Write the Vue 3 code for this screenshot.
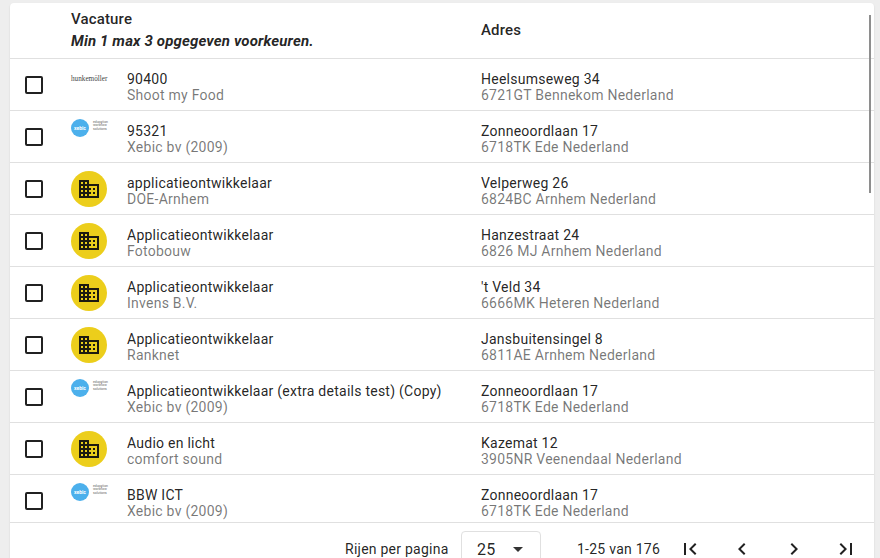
<template>
  <div class="page">
    <div class="card">
      <div class="table-wrap">
        <div class="row head">
          <div class="cell-check"></div>
          <div class="cell-title">
            <div class="head-title">Vacature</div>
            <div class="head-note">Min 1 max 3 opgegeven voorkeuren.</div>
          </div>
          <div class="cell-addr head-title">Adres</div>
        </div>

        <div v-for="row in rows" :key="row.id" class="row">
          <div class="cell-check"><span class="checkbox"></span></div>
          <div class="cell-logo">
            <div v-if="row.logo === 'hunkemoller'" class="logo-hunk">hunkemöller</div>
            <div v-else-if="row.logo === 'xebic'" class="logo-xebic">
              <span class="xebic-dot">xebic</span>
              <span class="xebic-tag">education<br />workflow<br />solutions</span>
            </div>
            <div v-else class="logo-default">
              <svg width="24" height="24" viewBox="0 0 24 24">
                <path fill="#1d1a10" d="M12 7V3H2v18h20V7H12zM6 19H4v-2h2v2zm0-4H4v-2h2v2zm0-4H4V9h2v2zm0-4H4V5h2v2zm4 12H8v-2h2v2zm0-4H8v-2h2v2zm0-4H8V9h2v2zm0-4H8V5h2v2zm10 12h-8v-2h2v-2h-2v-2h2v-2h-2V9h8v10zm-2-8h-2v2h2v-2zm0 4h-2v2h2v-2z" />
              </svg>
            </div>
          </div>
          <div class="cell-text">
            <div class="main">{{ row.title }}</div>
            <div class="sub">{{ row.company }}</div>
          </div>
          <div class="cell-addr cell-body">
            <div class="main">{{ row.street }}</div>
            <div class="sub">{{ row.city }}</div>
          </div>
        </div>
        <div class="scrollbar"></div>
      </div>

      <div class="footer">
        <span class="rows-label">Rijen per pagina</span>
        <div class="select">
          <span>25</span>
          <span class="caret"></span>
        </div>
        <span class="range">1-25 van 176</span>
        <div class="pager">
          <svg width="24" height="24" viewBox="0 0 24 24"><path d="M18.41 16.59 13.82 12l4.59-4.59L17 6l-6 6 6 6zM6 6h2v12H6z" /></svg>
          <svg width="24" height="24" viewBox="0 0 24 24"><path d="M15.41 7.41 14 6l-6 6 6 6 1.41-1.41L10.83 12z" /></svg>
          <svg width="24" height="24" viewBox="0 0 24 24"><path d="M10 6 8.59 7.41 13.17 12l-4.58 4.59L10 18l6-6z" /></svg>
          <svg width="24" height="24" viewBox="0 0 24 24"><path d="M5.59 7.41 10.18 12l-4.59 4.59L7 18l6-6-6-6zM16 6h2v12h-2z" /></svg>
        </div>
      </div>
    </div>
  </div>
</template>

<script setup>
const rows = [
  { id: 1, logo: 'hunkemoller', title: '90400', company: 'Shoot my Food', street: 'Heelsumseweg 34', city: '6721GT Bennekom Nederland' },
  { id: 2, logo: 'xebic', title: '95321', company: 'Xebic bv (2009)', street: 'Zonneoordlaan 17', city: '6718TK Ede Nederland' },
  { id: 3, logo: 'default', title: 'applicatieontwikkelaar', company: 'DOE-Arnhem', street: 'Velperweg 26', city: '6824BC Arnhem Nederland' },
  { id: 4, logo: 'default', title: 'Applicatieontwikkelaar', company: 'Fotobouw', street: 'Hanzestraat 24', city: '6826 MJ Arnhem Nederland' },
  { id: 5, logo: 'default', title: 'Applicatieontwikkelaar', company: 'Invens B.V.', street: "'t Veld 34", city: '6666MK Heteren Nederland' },
  { id: 6, logo: 'default', title: 'Applicatieontwikkelaar', company: 'Ranknet', street: 'Jansbuitensingel 8', city: '6811AE Arnhem Nederland' },
  { id: 7, logo: 'xebic', title: 'Applicatieontwikkelaar (extra details test) (Copy)', company: 'Xebic bv (2009)', street: 'Zonneoordlaan 17', city: '6718TK Ede Nederland' },
  { id: 8, logo: 'default', title: 'Audio en licht', company: 'comfort sound', street: 'Kazemat 12', city: '3905NR Veenendaal Nederland' },
  { id: 9, logo: 'xebic', title: 'BBW ICT', company: 'Xebic bv (2009)', street: 'Zonneoordlaan 17', city: '6718TK Ede Nederland' }
]
</script>

<style>
html, body {
  margin: 0;
  height: 100%;
  overflow: hidden;
  background: #eeeeee;
}
</style>

<style scoped>
.page {
  height: 558px;
  padding: 3px 6px 0 10px;
  box-sizing: border-box;
  background: #eeeeee;
  font-family: Roboto, sans-serif;
  font-size: 14px;
  letter-spacing: 0.25px;
  color: rgba(0, 0, 0, 0.87);
  overflow: hidden;
}

.card {
  background: #fff;
  height: 100%;
  border-radius: 4px 4px 0 0;
  box-shadow: 0 1px 2px rgba(0, 0, 0, 0.12);
  overflow: hidden;
}

/* scroll area: last row is cut off by the footer */
.table-wrap {
  position: relative;
  height: 519px;
  overflow: hidden;
}

.row {
  display: flex;
  align-items: center;
  height: 52px;
  box-sizing: border-box;
  border-bottom: 1px solid #e0e0e0;
}

.row.head {
  height: 56px;
  padding-bottom: 2px;
}

.cell-check {
  width: 61px;
  flex: none;
  padding-left: 15px;
  box-sizing: border-box;
  display: flex;
}

.checkbox {
  width: 18px;
  height: 18px;
  box-sizing: border-box;
  border: 2px solid #212121;
  border-radius: 2px;
  margin-top: 1px;
}

.cell-title {
  width: 410px;
  flex: none;
}

.head-title {
  font-size: 15px;
  font-weight: 500;
  letter-spacing: 0.15px;
  line-height: 20px;
}

.head-note {
  font-size: 15px;
  font-weight: 700;
  font-style: italic;
  letter-spacing: 0.15px;
  line-height: 20px;
  margin-top: 2px;
}

.cell-logo {
  width: 56px;
  height: 100%;
  flex: none;
  padding-top: 8px;
  box-sizing: border-box;
}

.cell-text {
  width: 354px;
  flex: none;
  padding-top: 5px;
}

.cell-body {
  padding-top: 5px;
}

.main {
  line-height: 16px;
}

.sub {
  line-height: 16px;
  color: rgba(0, 0, 0, 0.54);
}

.logo-hunk {
  font-family: "Liberation Serif", serif;
  font-size: 7.2px;
  letter-spacing: 0;
  line-height: 24px;
  height: 24px;
  color: #444;
}

.logo-xebic {
  display: flex;
  align-items: center;
  gap: 4px;
}

.xebic-dot {
  width: 18px;
  height: 18px;
  border-radius: 50%;
  background: #4cb0ec;
  color: #fff;
  font-size: 5px;
  font-weight: 700;
  letter-spacing: 0;
  line-height: 18px;
  text-align: center;
}

.xebic-tag {
  font-size: 3.4px;
  letter-spacing: 0;
  line-height: 3.5px;
  color: #666;
  margin-top: -4px;
}

.logo-default {
  width: 36px;
  height: 36px;
  border-radius: 50%;
  background: #ecce1b;
  display: flex;
  align-items: center;
  justify-content: center;
}

.scrollbar {
  position: absolute;
  top: 12px;
  right: 3px;
  width: 2px;
  height: 178px;
  background: #8e8e8e;
}

.footer {
  display: flex;
  align-items: center;
  height: 36px;
  padding: 8px 0 0 335px;
  border-top: 1px solid #e0e0e0;
}

.rows-label {
  width: 116px;
  flex: none;
}

.select {
  width: 80px;
  height: 36px;
  flex: none;
  box-sizing: border-box;
  border: 1px solid #e0e0e0;
  border-radius: 4px;
  display: flex;
  align-items: center;
  padding-left: 15px;
  font-size: 16px;
}

.caret {
  width: 0;
  height: 0;
  border-left: 5px solid transparent;
  border-right: 5px solid transparent;
  border-top: 5px solid #333;
  margin-left: 18px;
}

.range {
  margin-left: 36px;
  width: 101px;
  flex: none;
}

.pager {
  display: flex;
  gap: 28px;
}

.pager svg {
  fill: #212121;
  display: block;
}
</style>
